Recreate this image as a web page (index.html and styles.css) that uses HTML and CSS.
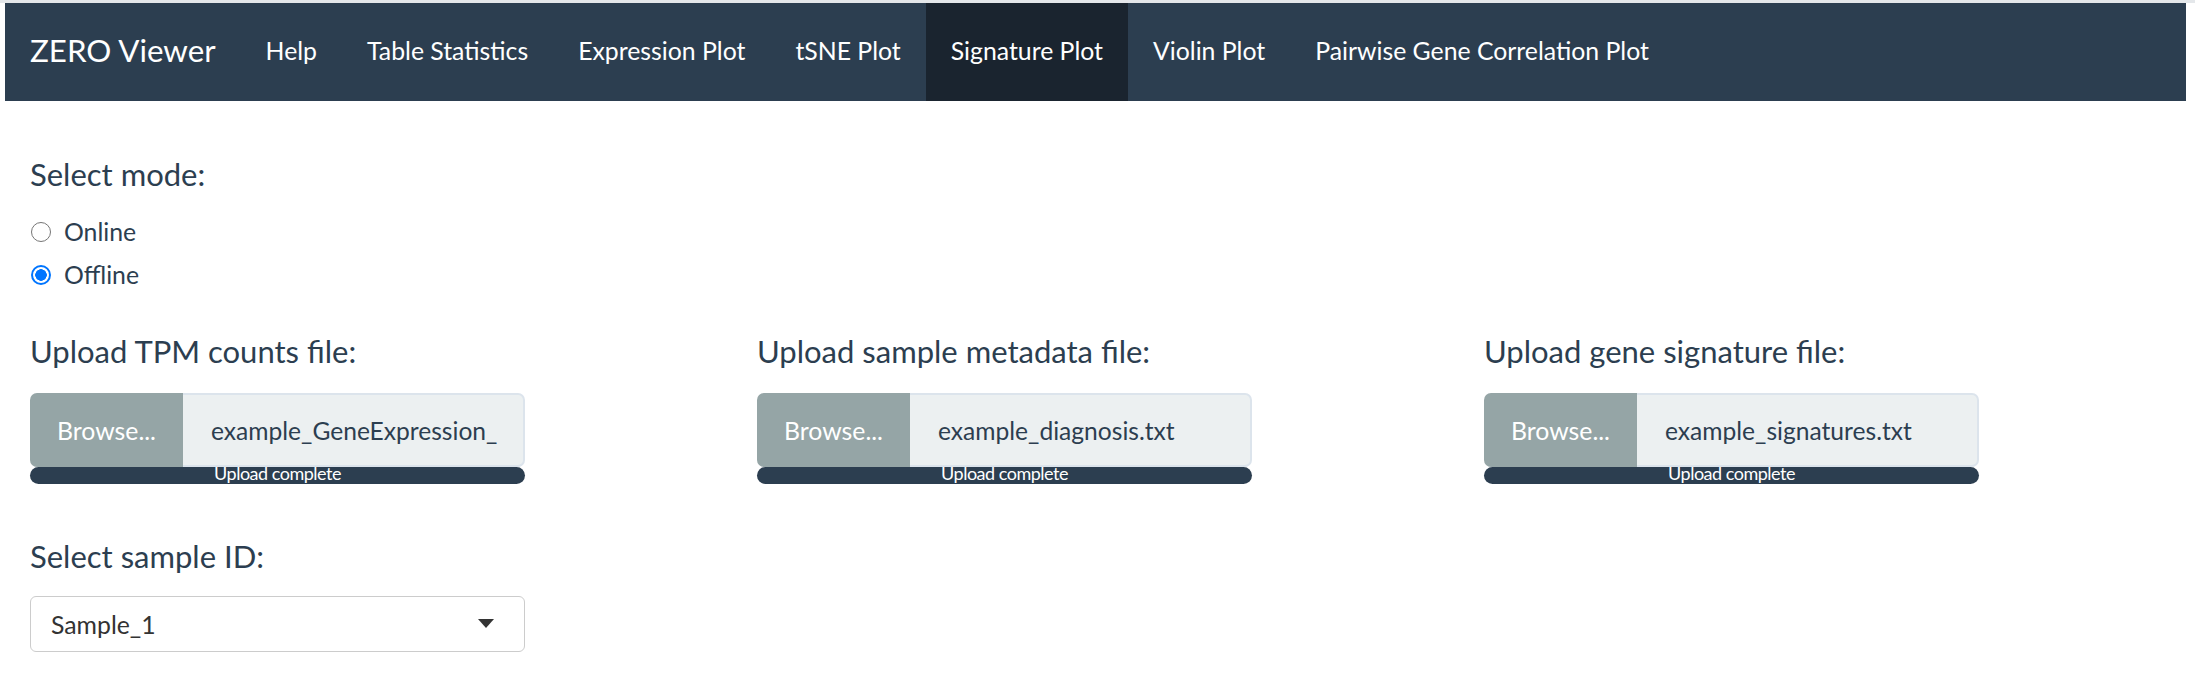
FILE: index.html
```html
<!DOCTYPE html>
<html lang="en">
<head>
<meta charset="utf-8">
<title>ZERO Viewer</title>
<link rel="stylesheet" href="styles.css">
</head>
<body>
<div class="topline"></div>
<div class="page">
  <nav class="navbar">
    <span class="brand">ZERO Viewer</span>
    <ul class="nav">
      <li class="nav-item">Help</li>
      <li class="nav-item">Table Statistics</li>
      <li class="nav-item">Expression Plot</li>
      <li class="nav-item">tSNE Plot</li>
      <li class="nav-item active">Signature Plot</li>
      <li class="nav-item">Violin Plot</li>
      <li class="nav-item">Pairwise Gene Correlation Plot</li>
    </ul>
  </nav>

  <main class="content">
    <section class="mode">
      <div class="label">Select mode:</div>
      <div class="radios">
        <label class="radio"><span class="radio-dot"></span><span>Online</span></label>
        <label class="radio"><span class="radio-dot checked"></span><span>Offline</span></label>
      </div>
    </section>

    <section class="uploads">
      <div class="col">
        <div class="label">Upload TPM counts file:</div>
        <div class="file-input">
          <span class="browse">Browse...</span>
          <span class="file-name"><span class="file-text">example_GeneExpression_</span></span>
        </div>
        <div class="progress">Upload complete</div>
      </div>
      <div class="col">
        <div class="label">Upload sample metadata file:</div>
        <div class="file-input">
          <span class="browse">Browse...</span>
          <span class="file-name"><span class="file-text">example_diagnosis.txt</span></span>
        </div>
        <div class="progress">Upload complete</div>
      </div>
      <div class="col">
        <div class="label">Upload gene signature file:</div>
        <div class="file-input">
          <span class="browse">Browse...</span>
          <span class="file-name"><span class="file-text">example_signatures.txt</span></span>
        </div>
        <div class="progress">Upload complete</div>
      </div>
    </section>

    <section class="sample">
      <div class="label">Select sample ID:</div>
      <div class="select">
        <span class="select-value">Sample_1</span>
        <span class="caret"></span>
      </div>
    </section>
  </main>
</div>
</body>
</html>
```

FILE: styles.css
```css
* {
  box-sizing: border-box;
}

html, body {
  margin: 0;
  padding: 0;
  background: #ffffff;
}

body {
  font-family: Lato, "Open Sans", "Liberation Sans", sans-serif;
  color: #2c3e50;
  width: 2195px;
  height: 694px;
  overflow: hidden;
}

.topline {
  height: 3px;
  background: #e4e7ea;
}

.page {
  margin: 0 9px 0 5px;
}

.navbar {
  display: flex;
  align-items: stretch;
  height: 98px;
  background: #2c3e50;
  color: #ffffff;
}

.brand {
  display: flex;
  align-items: center;
  padding: 0 25px 2px 25px;
  font-size: 31.3px;
  line-height: 1;
}

.nav {
  display: flex;
  list-style: none;
  margin: 0;
  padding: 0;
}

.nav-item {
  display: flex;
  align-items: center;
  padding: 0 25px 2px;
  font-size: 24.8px;
  line-height: 1;
  color: #ffffff;
}

.nav-item.active {
  background: #1a242f;
}

.content {
  padding: 0 25px;
}

.label {
  font-size: 31px;
  line-height: 34px;
  height: 34px;
  color: #2c3e50;
}

.mode {
  padding-top: 56px;
}

.radios {
  margin-top: 19px;
  display: flex;
  flex-direction: column;
}

.radio {
  display: flex;
  align-items: center;
  height: 43px;
  font-size: 24.8px;
  color: #2c3e50;
  gap: 13px;
  padding-left: 1px;
}

.radio-dot {
  width: 20px;
  height: 20px;
  border-radius: 50%;
  border: 1px solid #767676;
  background: #ffffff;
  flex: none;
}

.radio-dot.checked {
  border: 2px solid #0075ff;
  background: radial-gradient(circle, #0075ff 0 5.5px, #ffffff 6px);
}

.uploads {
  display: grid;
  grid-template-columns: repeat(3, 1fr);
  column-gap: 50px;
  margin: 38px -25px 0 0;
  padding-right: 25px;
}

.col .file-input {
  margin-top: 25px;
}

.file-input {
  display: flex;
  width: 495px;
  height: 74px;
}

.browse {
  flex: none;
  width: 153px;
  display: flex;
  align-items: center;
  justify-content: center;
  background: #95a5a6;
  color: #ffffff;
  font-size: 24.8px;
  border-radius: 7px 0 0 7px;
}

.file-name {
  flex: 1;
  min-width: 0;
  display: flex;
  align-items: center;
  padding: 0 24px 0 28px;
  background: #ecf0f1;
  border: 2px solid #dce4ec;
  border-left: none;
  border-radius: 0 7px 7px 0;
  font-size: 24.6px;
  color: #2c3e50;
}

.file-text {
  display: block;
  overflow: hidden;
  white-space: nowrap;
  width: 100%;
}

.progress {
  width: 495px;
  height: 17px;
  background: #2c3e50;
  border-radius: 9px;
  color: #ffffff;
  font-size: 18px;
  line-height: 13px;
  letter-spacing: -0.5px;
  text-align: center;
}

.sample {
  margin-top: 55px;
}

.select {
  margin-top: 23px;
  width: 495px;
  height: 56px;
  border: 1px solid #cccccc;
  border-radius: 6px;
  display: flex;
  align-items: center;
  justify-content: space-between;
  padding: 0 30px 0 20px;
  background: #ffffff;
}

.select-value {
  font-size: 24.8px;
  color: #333333;
}

.caret {
  width: 0;
  height: 0;
  border-left: 8px solid transparent;
  border-right: 8px solid transparent;
  border-top: 9px solid #333333;
  margin-top: -2px;
}
```
